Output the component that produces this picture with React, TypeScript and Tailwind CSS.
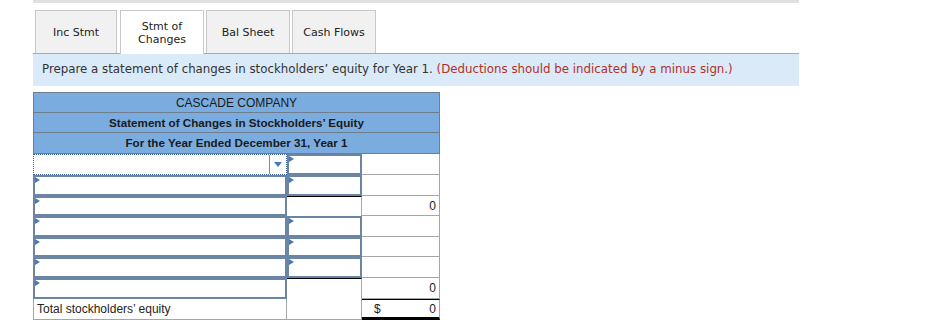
import React from "react";

const tabs = [
  { label: "Inc Stmt", w: "w-[82px]" },
  { label: "Stmt of\nChanges", w: "w-[84px] ml-[3px]", active: true },
  { label: "Bal Sheet", w: "w-[84px] ml-[2px]" },
  { label: "Cash Flows", w: "w-[84px] ml-[2px]" },
];

type Kind = "select" | "input" | "plain" | "total" | "label";

const rows: { h: string; a: Kind; b: Kind; c: string; last?: boolean }[] = [
  { h: "h-[21px]", a: "select", b: "input", c: "" },
  { h: "h-[21px]", a: "input", b: "input", c: "" },
  { h: "h-[20px]", a: "input", b: "total", c: "0" },
  { h: "h-[21px]", a: "input", b: "input", c: "" },
  { h: "h-[20px]", a: "input", b: "input", c: "" },
  { h: "h-[21px]", a: "input", b: "input", c: "" },
  { h: "h-[21px]", a: "input", b: "total", c: "0" },
  { h: "h-[21px]", a: "label", b: "plain", c: "0", last: true },
];

function Marker() {
  return (
    <span className="absolute left-0 top-0 w-0 h-0 border-y-[3px] border-y-transparent border-l-[5px] border-l-[#4a78b8]" />
  );
}

function Cell({ kind }: { kind: Kind }) {
  if (kind === "select") {
    return (
      <div className="relative h-full border border-dotted border-[#3c5f95] bg-white flex justify-end">
        <div className="w-[17px] h-full border-l border-[#8a8a8a] flex items-center justify-center">
          <span className="w-0 h-0 border-x-[4px] border-x-transparent border-t-[5px] border-t-[#4a78b8]" />
        </div>
      </div>
    );
  }
  if (kind === "input") {
    return (
      <div className="relative h-full border-2 border-[#6b86a4] bg-white">
        <Marker />
      </div>
    );
  }
  if (kind === "total") {
    return <div className="h-full border-t border-black border-r border-r-[#a6a6a6]" />;
  }
  if (kind === "label") {
    return (
      <div className="h-full border border-t-0 border-[#a6a6a6] pl-[3px] flex items-center text-[12px] text-[#222]">
        Total stockholders’ equity
      </div>
    );
  }
  return <div className="h-full border-b border-r border-[#a6a6a6]" />;
}

export default function App() {
  return (
    <div className="w-[925px] h-[320px] bg-white overflow-hidden font-['Liberation_Sans',Arial,sans-serif]">
      <div className="ml-[33px] w-[766px]">
        <div className="h-[3px] bg-[#e1e1e1]" />
        <div className="mt-[7px] flex items-end pl-[2px] font-['DejaVu_Sans',Verdana,sans-serif] text-[11px] text-[#222]">
          {tabs.map((t) => (
            <div
              key={t.label}
              className={`${t.w} border border-b-0 border-[#c8c8c8] flex items-center justify-center text-center leading-[13px] whitespace-pre-line ${
                t.active ? "bg-white relative -mb-px h-[44px]" : "bg-[#f1f1f1] h-[43px]"
              }`}
            >
              {t.label}
            </div>
          ))}
        </div>
        <div className="border-t border-[#a9a9a9] bg-[#dbeaf8] h-[33px] pl-[9px] flex items-center font-['DejaVu_Sans',Verdana,sans-serif] text-[11.8px] text-[#333]">
          Prepare a statement of changes in stockholders’ equity for Year 1.&nbsp;
          <span className="text-[#b0302b]">(Deductions should be indicated by a minus sign.)</span>
        </div>

        <div className="mt-[6px] w-[407px]">
          <div className="border border-[#6f7d8c] bg-[#7aacdf] text-[#1a1a1a]">
            <div className="h-[20px] flex items-center justify-center border-b border-[#6f7d8c] text-[12px]">
              CASCADE COMPANY
            </div>
            <div className="h-[20px] flex items-center justify-center border-b border-[#6f7d8c] text-[11.65px] font-bold">
              Statement of Changes in Stockholders’ Equity
            </div>
            <div className="h-[20px] flex items-center justify-center text-[11.65px] font-bold">
              For the Year Ended December 31, Year 1
            </div>
          </div>
          <div className="grid grid-cols-[254px_75px_78px]">
            {rows.map((r, i) => (
              <React.Fragment key={i}>
                <div className={r.h}>
                  <Cell kind={r.a} />
                </div>
                <div className={r.h}>
                  <Cell kind={r.b} />
                </div>
                <div
                  className={`${r.h} flex items-center justify-between pl-[6px] pr-[3px] text-[12px] text-[#222] border-r border-[#a6a6a6] ${
                    r.last ? "border-t border-t-black border-b-[3px] border-b-black" : "border-b border-b-[#a6a6a6]"
                  }`}
                >
                  <span className="pl-[6px]">{r.last ? "$" : ""}</span>
                  <span>{r.c}</span>
                </div>
              </React.Fragment>
            ))}
          </div>
        </div>
      </div>
    </div>
  );
}
